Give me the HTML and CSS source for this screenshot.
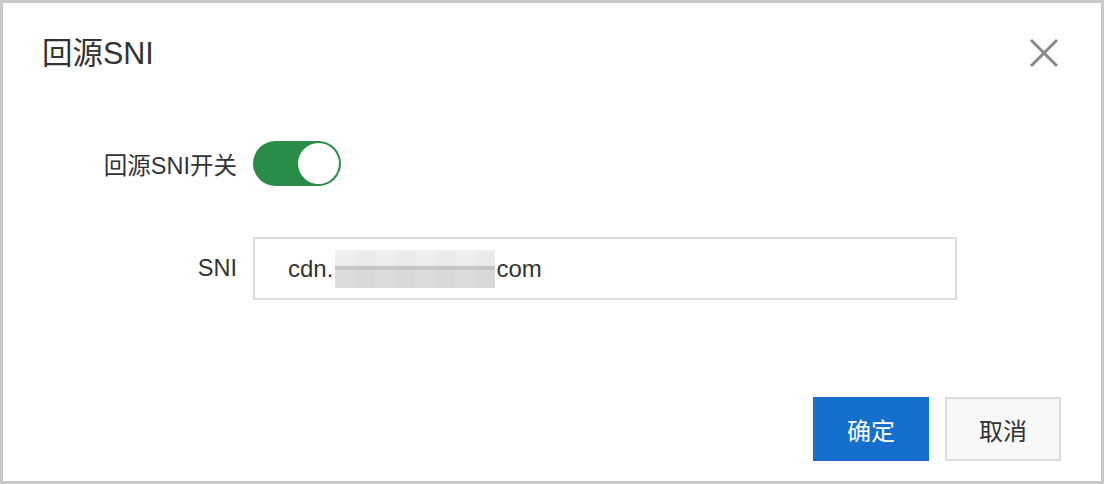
FILE: index.html
```html
<!DOCTYPE html>
<html lang="zh-CN">
<head>
<meta charset="utf-8">
<title>回源SNI</title>
<link rel="stylesheet" href="styles.css">
</head>
<body>
<div class="dialog">
  <div class="header">
    <h2 class="title">回源SNI</h2>
    <button class="close" aria-label="关闭">
      <svg width="30" height="30" viewBox="0 0 30 30"><path d="M2 2 L28 28 M28 2 L2 28" stroke="#888" stroke-width="3" fill="none"/></svg>
    </button>
  </div>
  <div class="form">
    <div class="label row1">回源SNI开关</div>
    <div class="control row1">
      <div class="switch"><span class="knob"></span></div>
    </div>
    <div class="label row2">SNI</div>
    <div class="control row2">
      <div class="input">
        <span>cdn.</span>
        <span class="blur">
          <i></i><i></i><i></i><i></i><i></i><i></i><i></i><i></i>
        </span>
        <span>com</span>
      </div>
    </div>
  </div>
  <div class="footer">
    <button class="btn primary">确定</button>
    <button class="btn">取消</button>
  </div>
</div>
</body>
</html>
```
FILE: styles.css
```css
* { box-sizing: border-box; }
html, body { margin: 0; padding: 0; background: #fff; }
body {
  font-family: "Liberation Sans", "Noto Sans CJK SC", sans-serif;
  color: #333;
}
.dialog {
  width: 1104px;
  height: 484px;
  border: 3px solid #c8c8c8;
  background: #fff;
  display: flex;
  flex-direction: column;
}
.header {
  height: 100px;
  display: flex;
  align-items: center;
  justify-content: space-between;
  padding: 0 42px 0 39px;
}
.title {
  margin: 0;
  font-size: 30.5px;
  font-weight: normal;
  color: #333;
  line-height: 1;
}
.close {
  border: 0;
  background: none;
  padding: 0;
  width: 30px;
  height: 30px;
  display: flex;
}
.form {
  margin-top: 38px;
  display: grid;
  grid-template-columns: 234px 704px;
  column-gap: 16px;
  row-gap: 51px;
  align-items: center;
}
.label {
  text-align: right;
  font-size: 23.5px;
  color: #333;
}
.switch {
  width: 88px;
  height: 45px;
  border-radius: 23px;
  background: #2a8d47;
  display: flex;
  justify-content: flex-end;
  align-items: center;
  padding: 2px;
}
.knob {
  width: 41px;
  height: 41px;
  border-radius: 50%;
  background: #fff;
}
.input {
  height: 63px;
  border: 2px solid #dcdcdc;
  display: flex;
  align-items: center;
  padding-left: 33px;
  font-size: 24px;
  color: #333;
}
.blur {
  display: flex;
  height: 38px;
  margin: 0 1px 0 2px;
}
.blur i {
  width: 20px;
  height: 38px;
  background: linear-gradient(#f0f0f0 0, #ececec 16px, #c8c8c8 16px, #c8c8c8 20px, #dcdcdc 20px, #dcdcdc 100%);
}
.blur i:nth-child(2n) {
  background: linear-gradient(#ececec 0, #e8e8e8 16px, #c4c4c4 16px, #c4c4c4 20px, #d8d8d8 20px, #d8d8d8 100%);
}
.footer {
  margin-top: auto;
  display: flex;
  justify-content: flex-end;
  gap: 16px;
  padding: 0 40px 20px 0;
}
.btn {
  width: 116px;
  height: 64px;
  font-family: "Liberation Sans", "Noto Sans CJK SC", sans-serif;
  font-size: 24px;
  color: #333;
  background: #f7f7f7;
  border: 2px solid #dcdcdc;
  padding: 0;
}
.primary {
  background: #1470cc;
  border-color: #1470cc;
  color: #fff;
}
```
